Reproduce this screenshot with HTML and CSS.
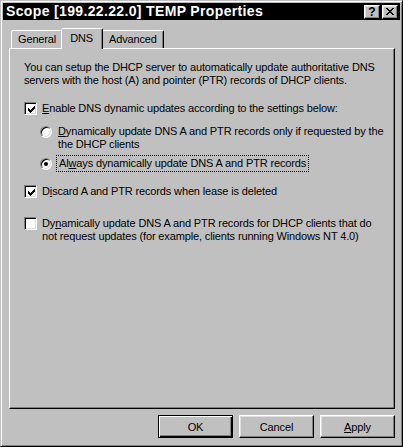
FILE: index.html
```html
<!DOCTYPE html>
<html>
<head>
<meta charset="utf-8">
<link rel="stylesheet" href="styles.css">
</head>
<body>
<div class="window">
  <div class="titlebar">
    <span class="title">Scope [199.22.22.0] TEMP Properties</span>
    <div class="caption-btns">
      <span class="cbtn help">?</span>
      <span class="cbtn close"><svg width="8" height="7" viewBox="0 0 8 7" shape-rendering="crispEdges"><path d="M0 0h2v1h-2zM6 0h2v1h-2zM1 1h2v1h-2zM5 1h2v1h-2zM2 2h4v1h-4zM3 3h2v1h-2zM2 4h4v1h-4zM1 5h2v1h-2zM5 5h2v1h-2zM0 6h2v1h-2zM6 6h2v1h-2z" fill="#000"/></svg></span>
    </div>
  </div>
  <div class="body">
    <div class="tabs">
      <div class="tab">General</div>
      <div class="tab active">DNS</div>
      <div class="tab">Advanced</div>
    </div>
    <div class="panel">
      <p class="intro">You can setup the DHCP server to automatically update authoritative DNS servers with the host (A) and pointer (PTR) records of DHCP clients.</p>

      <div class="row r-enable">
        <span class="check on"><svg width="7" height="7" viewBox="0 0 7 7" shape-rendering="crispEdges"><path d="M0 2h1v3h-1zM1 3h1v3h-1zM2 4h1v3h-1zM3 3h1v3h-1zM4 2h1v3h-1zM5 1h1v3h-1zM6 0h1v3h-1z" fill="#000"/></svg></span>
        <span class="label"><u>E</u>nable DNS dynamic updates according to the settings below:</span>
      </div>

      <div class="radios">
        <div class="row r-radio1">
          <span class="radio"></span>
          <span class="label rlabel"><u>D</u>ynamically update DNS A and PTR records only if requested by the<br>the DHCP clients</span>
        </div>
        <div class="row r-radio2">
          <span class="radio on"></span>
          <span class="label rlabel focus">Al<u>w</u>ays dynamically update DNS A and PTR records</span>
        </div>
      </div>

      <div class="row r-discard">
        <span class="check on"><svg width="7" height="7" viewBox="0 0 7 7" shape-rendering="crispEdges"><path d="M0 2h1v3h-1zM1 3h1v3h-1zM2 4h1v3h-1zM3 3h1v3h-1zM4 2h1v3h-1zM5 1h1v3h-1zM6 0h1v3h-1z" fill="#000"/></svg></span>
        <span class="label">D<u>i</u>scard A and PTR records when lease is deleted</span>
      </div>

      <div class="row r-legacy">
        <span class="check"></span>
        <span class="label">Dy<u>n</u>amically update DNS A and PTR records for DHCP clients that do<br>not request updates (for example, clients running Windows NT 4.0)</span>
      </div>
    </div>
    <div class="footer">
      <button class="btn default">OK</button>
      <button class="btn">Cancel</button>
      <button class="btn"><u>A</u>pply</button>
    </div>
  </div>
</div>
</body>
</html>
```

FILE: styles.css
```css
* { box-sizing: border-box; }
html, body { margin: 0; padding: 0; }
body {
  width: 403px;
  height: 447px;
  background: #c0c0c0;
  font-family: "Liberation Sans", Arial, sans-serif;
  font-size: 11px;
  line-height: 13px;
  letter-spacing: -0.14px;
  color: #000;
  overflow: hidden;
}
u { text-decoration: underline; text-underline-offset: 1px; }

.window {
  width: 403px;
  height: 447px;
  background: #c0c0c0;
  border: 1px solid;
  border-color: #c0c0c0 #000 #000 #c0c0c0;
  box-shadow: inset 1px 1px #fff, inset -1px -1px #808080;
  padding: 2px;
  display: flex;
  flex-direction: column;
}

.titlebar {
  height: 17px;
  background: #000;
  color: #fff;
  display: flex;
  align-items: center;
  justify-content: space-between;
  padding: 0 2px 0 3px;
  flex-shrink: 0;
}
.title {
  font-weight: bold;
  font-size: 14px;
  line-height: 17px;
  letter-spacing: 0.35px;
  white-space: nowrap;
}
.caption-btns { display: flex; gap: 2px; }
.cbtn {
  width: 16px;
  height: 14px;
  background: #c0c0c0;
  border: 1px solid;
  border-color: #fff #000 #000 #fff;
  box-shadow: inset -1px -1px #808080, inset 1px 1px #dfdfdf;
  display: flex;
  align-items: center;
  justify-content: center;
  color: #000;
}
.help { font-weight: bold; font-size: 12px; line-height: 12px; padding-top: 1px; letter-spacing: 0; }
.close svg { display: block; }

.body {
  flex: 1;
  display: flex;
  flex-direction: column;
  padding: 8px 5px 6px 6px;
}

.tabs {
  display: flex;
  align-items: flex-end;
  height: 20px;
  padding-left: 2px;
  flex-shrink: 0;
}
.tab {
  height: 18px;
  padding: 0 6px 0 6px;
  border: 1px solid;
  border-bottom: none;
  border-color: #fff #000 transparent #fff;
  box-shadow: inset -1px 0 #808080;
  border-radius: 2px 2px 0 0;
  background: #c0c0c0;
  line-height: 16px;
  white-space: nowrap;
}
.tab.active {
  position: relative;
  z-index: 2;
  height: 21px;
  margin: 0 -1px -1px -2px;
  padding: 1px 9px 0 8px;
}

.panel {
  flex: 1;
  border: 1px solid;
  border-color: #fff #000 #000 #fff;
  box-shadow: inset -1px -1px #808080;
  padding: 12px 8px 0 14px;
  position: relative;
  z-index: 1;
}

.intro { margin: 0; width: 362px; }

.row { display: flex; align-items: flex-start; }
.row .label { flex: 1; white-space: nowrap; }

.check {
  width: 13px;
  height: 13px;
  flex-shrink: 0;
  background: #fff;
  border: 1px solid;
  border-color: #808080 #fff #fff #808080;
  box-shadow: inset 1px 1px #000, inset -1px -1px #dfdfdf;
  margin-right: 5px;
  display: flex;
  align-items: center;
  justify-content: center;
}
.check svg { display: block; margin: 1px 0 0 1px; }

.r-enable { margin-top: 15px; }
.radios { padding-left: 16px; }
.r-radio1 { margin-top: 10px; }
.r-radio2 { margin-top: 6px; }
.r-discard { margin-top: 15px; }
.r-legacy { margin-top: 19px; }

.radio {
  width: 12px;
  height: 12px;
  flex-shrink: 0;
  border-radius: 50%;
  background: #fff;
  border: 1px solid;
  border-color: #808080 #fff #fff #808080;
  box-shadow: inset 1px 1px #000, inset -1px -1px #dfdfdf;
  margin: 1px 5px 0 0;
  display: flex;
  align-items: center;
  justify-content: center;
}
.radio.on::after {
  content: "";
  width: 4px;
  height: 4px;
  border-radius: 50%;
  background: #000;
}
.rlabel { padding-left: 1px; }
.row .focus {
  flex: 0 0 auto;
  outline: 1px dotted #000;
  outline-offset: 1px;
  margin-left: 1px;
  padding: 0 1px 0 1px;
}

.footer {
  display: flex;
  justify-content: flex-end;
  gap: 6px;
  margin-top: 6px;
  flex-shrink: 0;
}
.btn {
  width: 75px;
  height: 23px;
  background: #c0c0c0;
  font-family: "Liberation Sans", Arial, sans-serif;
  font-size: 11px;
  letter-spacing: -0.14px;
  color: #000;
  border: 1px solid;
  border-color: #fff #000 #000 #fff;
  box-shadow: inset -1px -1px #808080, inset 1px 1px #dfdfdf;
  padding: 0;
}
.btn.default {
  border-color: #000;
  box-shadow: inset 1px 1px #fff, inset -1px -1px #000, inset -2px -2px #808080;
}
```
